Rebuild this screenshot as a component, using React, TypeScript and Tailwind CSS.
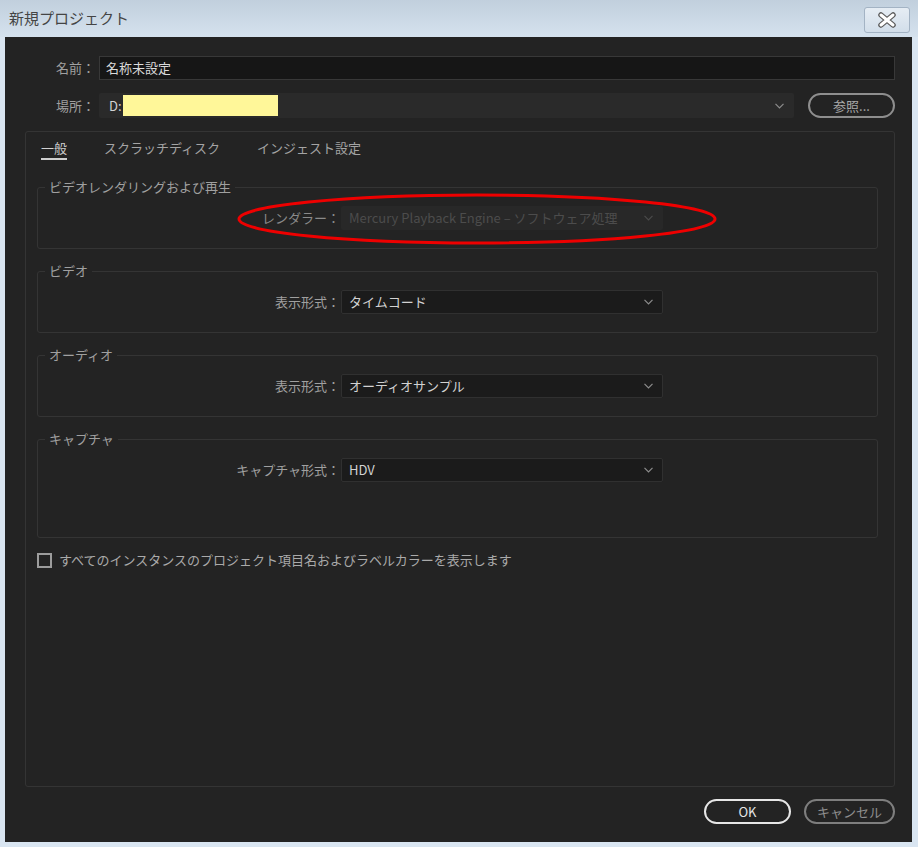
const Chevron = ({ color = "#8c8c8c" }: { color?: string }) => (
  <svg width="9" height="6" viewBox="0 0 9 6" fill="none">
    <polyline points="0.5,0.8 4.5,4.8 8.5,0.8" stroke={color} strokeWidth="1.2" />
  </svg>
);

const Select = ({ value, disabled = false }: { value: string; disabled?: boolean }) => (
  <div
    className={
      disabled
        ? "ml-[1px] flex h-[24px] w-[322px] items-center justify-between rounded-[2px] bg-[#282828] pl-[8px] pr-[10px]"
        : "ml-[1px] flex h-[24px] w-[322px] items-center justify-between rounded-[2px] border border-[#303030] bg-[#1b1b1b] pl-[7px] pr-[9px]"
    }
  >
    <span className={disabled ? "text-[13px] leading-[18px] text-[#4c4c4c]" : "text-[13px] leading-[18px] text-[#d2d2d2]"}>
      {value}
    </span>
    <Chevron color={disabled ? "#4a4a4a" : "#8c8c8c"} />
  </div>
);

const Group = ({
  title,
  label,
  value,
  disabled = false,
  tall = false,
}: {
  title: string;
  label: string;
  value: string;
  disabled?: boolean;
  tall?: boolean;
}) => (
  <fieldset
    className={
      tall
        ? "ml-[11px] mr-[16px] rounded-[3px] border border-[#343434] pb-[55px] pt-[10px]"
        : "ml-[11px] mr-[16px] rounded-[3px] border border-[#343434] pb-[18px] pt-[10px]"
    }
  >
    <legend className="ml-[7px] px-[4px] text-[13px] leading-[18px] text-[#a0a0a0]">{title}</legend>
    <div className="flex items-center">
      <span
        className={
          disabled
            ? "w-[302px] text-right text-[13px] leading-[18px] text-[#8a8a8a]"
            : "w-[302px] text-right text-[13px] leading-[18px] text-[#a0a0a0]"
        }
      >
        {label}
      </span>
      <Select value={value} disabled={disabled} />
    </div>
  </fieldset>
);

export default function App() {
  return (
    <div className="relative flex h-[847px] w-[918px] flex-col bg-[#d9e5f1] font-['Noto_Sans_CJK_JP','Noto_Sans',sans-serif]">
      {/* title bar */}
      <div className="flex h-[37px] items-start justify-between bg-gradient-to-b from-[#c1cfdd] to-[#d5e2ee] pl-[9px] pr-[8px]">
        <span className="mt-[8px] text-[15px] leading-[20px] text-[#444444]">新規プロジェクト</span>
        <div className="mt-[7px] flex h-[26px] w-[46px] items-center justify-center rounded-[3px] border border-[#a3b3c4] bg-gradient-to-b from-[#e6edf4] to-[#d2deea]">
          <svg width="20" height="16" viewBox="0 0 20 16">
            <path d="M4 3 L16 13 M16 3 L4 13" stroke="#5b5b5b" strokeWidth="5.5" strokeLinecap="round" />
            <path d="M4 3 L16 13 M16 3 L4 13" stroke="#ffffff" strokeWidth="3" strokeLinecap="round" />
          </svg>
        </div>
      </div>

      {/* body */}
      <div className="mx-[5px] flex h-[805px] w-[907px] flex-col bg-[#232323]">
        {/* name */}
        <div className="mr-[17px] mt-[19px] flex items-center">
          <span className="w-[90px] text-right text-[13px] leading-[18px] text-[#a0a0a0]">名前：</span>
          <div className="ml-[4px] flex h-[24px] flex-1 items-center border border-[#383838] bg-[#161616] pl-[6px]">
            <span className="text-[13px] leading-[18px] text-[#dadada]">名称未設定</span>
          </div>
        </div>

        {/* location */}
        <div className="mr-[17px] mt-[13px] flex items-center">
          <span className="w-[90px] text-right text-[13px] leading-[18px] text-[#a0a0a0]">場所：</span>
          <div className="ml-[4px] flex h-[25px] w-[695px] items-center justify-between rounded-[2px] bg-[#2a2a2a] pl-[10px] pr-[10px]">
            <div className="flex items-center">
              <span className="text-[13px] leading-[18px] text-[#d2d2d2]">D:</span>
              <div className="ml-[1px] h-[21px] w-[155px] bg-[#fff799]" />
            </div>
            <Chevron />
          </div>
          <button className="ml-[14px] flex h-[25px] w-[87px] items-center justify-center rounded-full border-2 border-[#8e8e8e] text-[13px] leading-[18px] text-[#a8a8a8]">
            参照...
          </button>
        </div>

        {/* tab panel */}
        <div className="ml-[20px] mr-[17px] mt-[13px] flex h-[656px] flex-col rounded-[3px] border border-[#343434]">
          <div className="flex gap-[37px] pl-[15px] pt-[6px]">
            <span className="border-b-2 border-[#cfcfcf] text-[13px] leading-[20px] text-[#d0d0d0]">一般</span>
            <span className="border-b-2 border-transparent text-[13px] leading-[20px] text-[#a4a4a4]">スクラッチディスク</span>
            <span className="border-b-2 border-transparent text-[13px] leading-[20px] text-[#a4a4a4]">インジェスト設定</span>
          </div>

          <div className="mt-[18px] flex flex-col gap-[13px]">
            <Group
              title="ビデオレンダリングおよび再生"
              label="レンダラー："
              value="Mercury Playback Engine – ソフトウェア処理"
              disabled
            />
            <Group title="ビデオ" label="表示形式：" value="タイムコード" />
            <Group title="オーディオ" label="表示形式：" value="オーディオサンプル" />
            <Group title="キャプチャ" label="キャプチャ形式：" value="HDV" tall />
          </div>

          <div className="ml-[11px] mt-[13px] flex items-center">
            <div className="h-[15px] w-[15px] border-2 border-[#9c9c9c]" />
            <span className="ml-[7px] text-[13px] leading-[18px] text-[#aaaaaa]">
              すべてのインスタンスのプロジェクト項目名およびラベルカラーを表示します
            </span>
          </div>
        </div>

        {/* buttons */}
        <div className="mr-[17px] mt-[12px] flex justify-end gap-[13px]">
          <button className="flex h-[25px] w-[87px] items-center justify-center rounded-full border-2 border-[#e6e6e6] text-[13px] leading-[18px] text-[#e6e6e6]">
            OK
          </button>
          <button className="flex h-[25px] w-[91px] items-center justify-center rounded-full border-2 border-[#7e7e7e] text-[13px] leading-[18px] text-[#8e8e8e]">
            キャンセル
          </button>
        </div>
      </div>

      {/* annotation */}
      <svg className="pointer-events-none absolute left-0 top-0" width="918" height="847">
        <ellipse cx="477" cy="219" rx="238" ry="24" fill="none" stroke="#ee0000" strokeWidth="3" />
      </svg>
    </div>
  );
}
